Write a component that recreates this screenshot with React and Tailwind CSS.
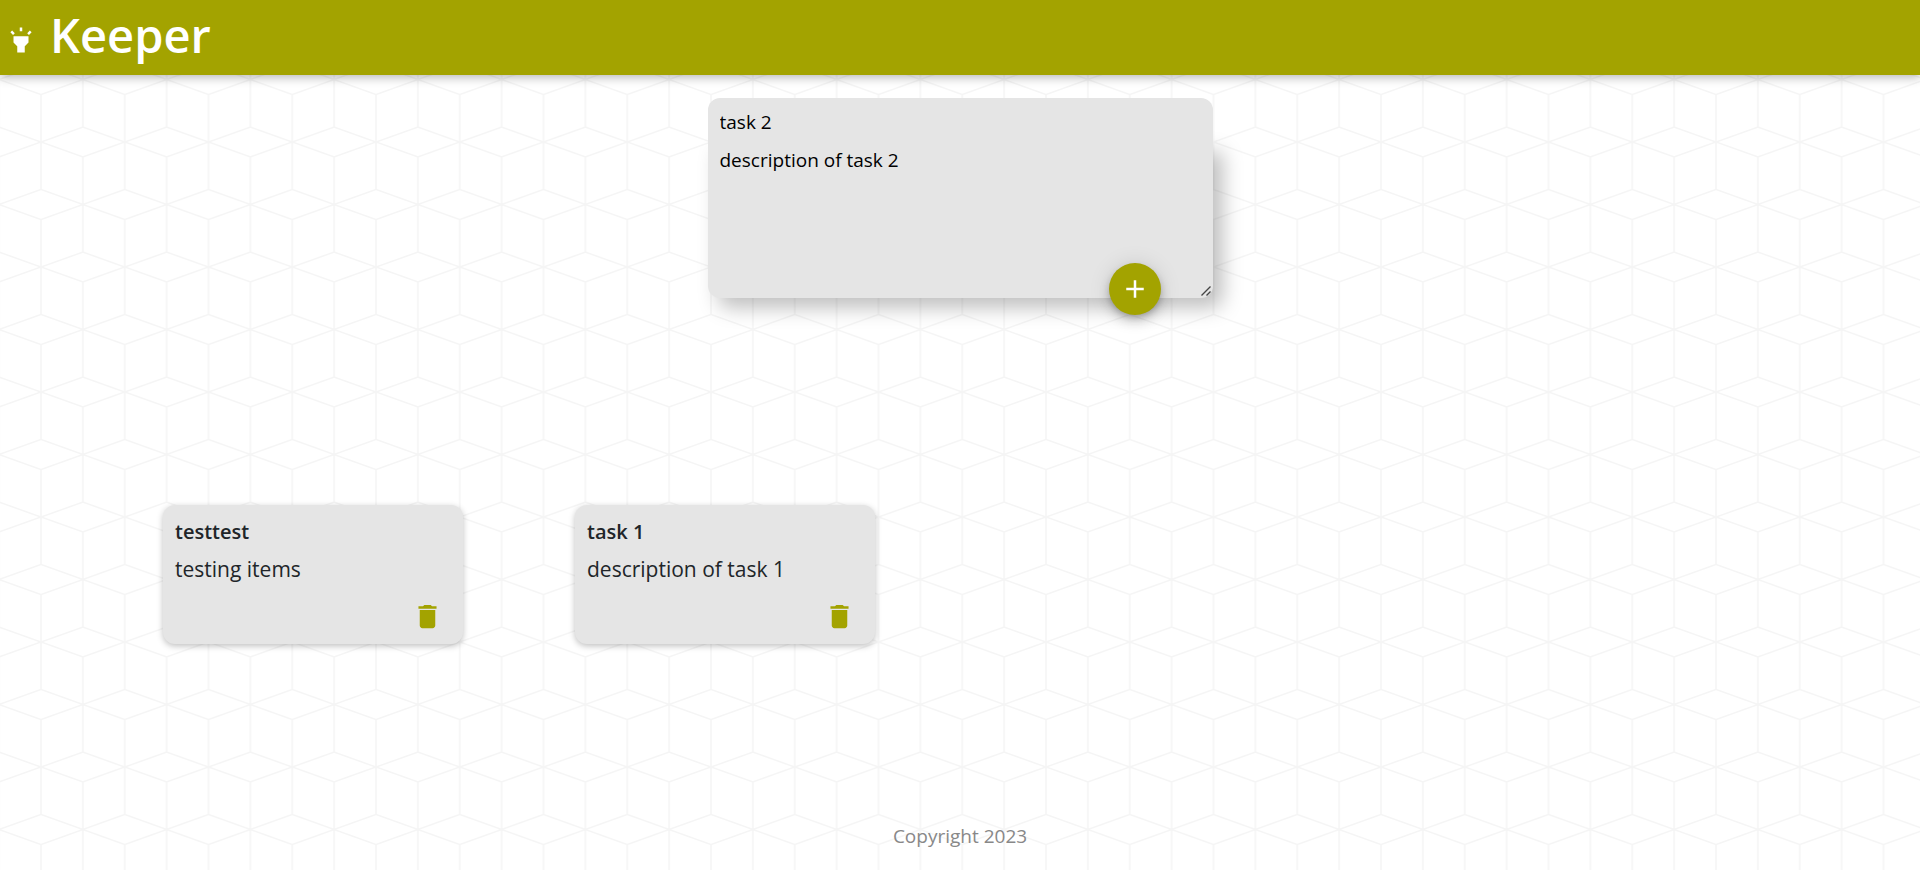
import { useState } from "react";
import { MdAdd, MdDelete, MdHighlight } from "react-icons/md";

function CubeBackdrop() {
  return (
    <svg className="absolute inset-0 -z-10 h-full w-full" aria-hidden="true">
      <defs>
        <pattern
          id="cubes"
          width="83.75"
          height="125"
          patternUnits="userSpaceOnUse"
          patternTransform="translate(41 17)"
        >
          <path
            d="M0 0V47.5M0 77.5V125M83.75 0V47.5M83.75 77.5V125M41.875 15V110M0 0L41.875 15L83.75 0M0 125L41.875 110L83.75 125M0 47.5L83.75 77.5M0 77.5L83.75 47.5"
            fill="none"
            stroke="#f5f5f5"
            strokeWidth="1.6"
          />
        </pattern>
      </defs>
      <rect width="100%" height="100%" fill="url(#cubes)" />
    </svg>
  );
}

function Header() {
  return (
    <header className="flex h-[75px] items-center gap-3.5 bg-[#a3a300] px-1.5 text-white shadow-[0_2px_10px_rgba(0,0,0,0.3)]">
      <MdHighlight className="mt-1 size-[30px]" aria-hidden="true" />
      <h1 className="pb-1 text-[47px] leading-none font-semibold">Keeper</h1>
    </header>
  );
}

function NoteForm({ onAdd }) {
  const [title, setTitle] = useState("task 2");
  const [content, setContent] = useState("description of task 2");

  function submit(event) {
    event.preventDefault();
    onAdd({ title, content });
    setTitle("");
    setContent("");
  }

  return (
    <form onSubmit={submit} className="mx-auto flex w-[505px] flex-col">
      <input
        aria-label="Title"
        value={title}
        onChange={(e) => setTitle(e.target.value)}
        className="relative z-10 h-11 rounded-t-[12px] bg-[#e5e5e5] px-3 pt-1 text-[19px] text-black outline-none"
      />
      <div className="relative flex">
        <textarea
          aria-label="Content"
          value={content}
          onChange={(e) => setContent(e.target.value)}
          className="h-39 w-full resize-y rounded-b-[12px] bg-[#e5e5e5] px-3 py-1 text-[19px] text-black shadow-[10px_10px_20px_rgba(0,0,0,0.25)] outline-none [&::-webkit-resizer]:bg-transparent"
        />
        <svg
          className="pointer-events-none absolute right-0.5 bottom-0.5 size-2.5"
          viewBox="0 0 10 10"
          fill="none"
          stroke="#444444"
          strokeWidth="1.4"
          aria-hidden="true"
        >
          <path d="M0.5 9.5L9.5 0.5M5.5 9.5L9.5 5.5" />
        </svg>
        <button
          type="submit"
          aria-label="Add note"
          className="absolute right-13 -bottom-[17px] flex size-[52px] items-center justify-center rounded-full bg-[#a3a300] text-white shadow-[0_3px_6px_-1px_rgba(0,0,0,0.2),0_7px_12px_rgba(0,0,0,0.14),0_1px_22px_rgba(0,0,0,0.12)]"
        >
          <MdAdd className="size-[30px]" aria-hidden="true" />
        </button>
      </div>
    </form>
  );
}

function Note({ title, content, onDelete }) {
  return (
    <article className="flex w-[300px] flex-col rounded-[12px] bg-[#e5e5e5] p-3 text-[#212529] shadow-[0_2px_6px_rgba(0,0,0,0.25)]">
      <h2 className="text-xl leading-[30px] font-semibold">{title}</h2>
      <p className="mt-1.5 text-[21px] leading-8">{content}</p>
      <button
        type="button"
        aria-label={"Delete " + title}
        onClick={onDelete}
        className="mt-4 mr-2 self-end text-[#a3a300]"
      >
        <MdDelete className="size-[31px]" aria-hidden="true" />
      </button>
    </article>
  );
}

export default function App() {
  const [notes, setNotes] = useState([
    { title: "testtest", content: "testing items" },
    { title: "task 1", content: "description of task 1" },
  ]);

  return (
    <div className="min-h-screen bg-white pb-2.5 font-['Open_Sans','Noto_Sans',sans-serif]">
      <div className="relative isolate flex min-h-[calc(100vh-10px)] flex-col">
        <CubeBackdrop />
        <Header />
        <main className="flex-1 pt-[23px]">
          <NoteForm onAdd={(note) => setNotes([...notes, note])} />
          <section
            aria-label="Notes"
            className="mt-[207px] flex flex-wrap gap-x-28 gap-y-8 px-[163px]"
          >
            {notes.map((note, index) => (
              <Note
                key={index}
                title={note.title}
                content={note.content}
                onDelete={() => setNotes(notes.filter((_, i) => i !== index))}
              />
            ))}
          </section>
        </main>
        <footer className="pb-5 text-center text-[19px] leading-7 text-[#888888]">
          Copyright 2023
        </footer>
      </div>
    </div>
  );
}
